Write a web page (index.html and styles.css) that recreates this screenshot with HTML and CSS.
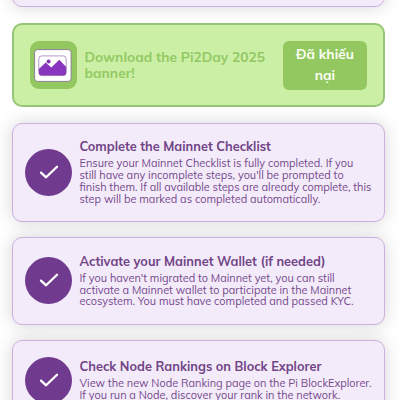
FILE: index.html
```html
<!DOCTYPE html>
<html lang="en">
<head>
<meta charset="utf-8">
<title>Pi2Day tasks</title>
<link rel="stylesheet" href="styles.css">
</head>
<body>
<main class="list">
  <section class="card card-previous"></section>
  <section class="card card-banner">
    <div class="banner-icon">
      <svg width="38" height="33" viewBox="0 0 38 33">
        <rect x=".6" y=".6" width="36.5" height="31.8" rx="3" fill="#fff" stroke="#8c8192"/>
        <path d="M4.8 20 11.7 13.5 17.3 18.4 25.3 10.8 32.2 18V23.5Q32.2 26.6 29 26.6H8Q4.8 26.6 4.8 23.5Z" fill="#8736bd"/>
        <rect x="4.8" y="6.9" width="27.4" height="19.7" rx="3" fill="none" stroke="#8250a2" stroke-width=".6"/>
        <circle cx="14.6" cy="12.5" r="2" fill="#8133b2"/>
      </svg>
    </div>
    <div class="banner-title">Download the Pi2Day 2025<br>banner!</div>
    <div class="claimed">Đã khiếu<br>nại</div>
  </section>
  <section class="card card-checklist">
    <div class="check"><svg width="20" height="15" viewBox="0 0 20 15"><path d="M2 7.6 7.1 12.3 18 1.7"/></svg></div>
    <div class="copy">
      <h2>Complete the Mainnet Checklist</h2>
      <p>Ensure your Mainnet Checklist is fully completed. If you<br>still have any incomplete steps, you'll be prompted to<br>finish them. If all available steps are already complete, this<br>step will be marked as completed automatically.</p>
    </div>
  </section>
  <section class="card card-wallet">
    <div class="check"><svg width="20" height="15" viewBox="0 0 20 15"><path d="M2 7.6 7.1 12.3 18 1.7"/></svg></div>
    <div class="copy">
      <h2>Activate your Mainnet Wallet (if needed)</h2>
      <p>If you haven't migrated to Mainnet yet, you can still<br>activate a Mainnet wallet to participate in the Mainnet<br>ecosystem. You must have completed and passed KYC.</p>
    </div>
  </section>
  <section class="card card-node">
    <div class="check"><svg width="20" height="15" viewBox="0 0 20 15"><path d="M2 7.6 7.1 12.3 18 1.7"/></svg></div>
    <div class="copy">
      <h2>Check Node Rankings on Block Explorer</h2>
      <p>View the new Node Ranking page on the Pi BlockExplorer.<br>If you run a Node, discover your rank in the network.</p>
    </div>
  </section>
</main>
</body>
</html>
```
FILE: styles.css
```css
* { box-sizing: border-box; }
html, body { margin: 0; height: 400px; overflow: hidden; background: #fff; }
body { font-family: Mulish, Muli, Lato, "Noto Sans", sans-serif; }
.list {
  height: 400px;
  padding: 0 15px 0 12px;
  overflow: hidden;
  display: flex;
  flex-direction: column;
}
.card {
  flex: none;
  display: flex;
  align-items: center;
  padding-left: 12px;
  background: #f3eafa;
  border: 1px solid #cdb0df;
  border-radius: 10px;
  box-shadow: 0 0 17px rgba(0, 0, 0, .17);
}
.card-previous { height: 27px; margin-top: -20px; }
.card-banner {
  height: 84px;
  margin-top: 16px;
  padding-left: 15.5px;
  background: #cbefa5;
  border: 2px solid #97c578;
  box-shadow: none;
}
.card-checklist { height: 99px; margin-top: 16px; }
.card-wallet { height: 88px; margin-top: 15px; }
.card-node { height: 81px; margin-top: 15px; }
.banner-icon {
  width: 47.5px;
  height: 48px;
  border-radius: 9px;
  background: #93c75f;
  display: grid;
  place-items: center;
}
.banner-title {
  width: 191px;
  margin-left: 7.5px;
  color: #93c963;
  font-size: 13.75px;
  line-height: 16px;
  font-weight: 700;
  white-space: nowrap;
}
.claimed {
  width: 84px;
  height: 49px;
  margin-left: 7.5px;
  padding-top: 2px;
  border-radius: 6px;
  background: #93c75f;
  color: #fbfff3;
  font-size: 13.75px;
  line-height: 21px;
  font-weight: 700;
  text-align: center;
}
.check {
  flex: none;
  width: 47px;
  height: 47px;
  margin-bottom: 1px;
  border-radius: 50%;
  background: #703b8f;
  display: grid;
  place-items: center;
}
.card-node .check { margin-bottom: 0; }
.check svg { fill: none; stroke: #fff; stroke-width: 2.3; stroke-linecap: round; stroke-linejoin: round; }
.copy { margin-left: 7.5px; padding-bottom: 1px; color: #754a8b; white-space: nowrap; }
.copy h2 { margin: 0 0 3px; font-size: 12.75px; line-height: 17px; font-weight: 700; color: #704486; }
.copy p { margin: 0; font-size: 10.9px; line-height: 11.9px; }
```
